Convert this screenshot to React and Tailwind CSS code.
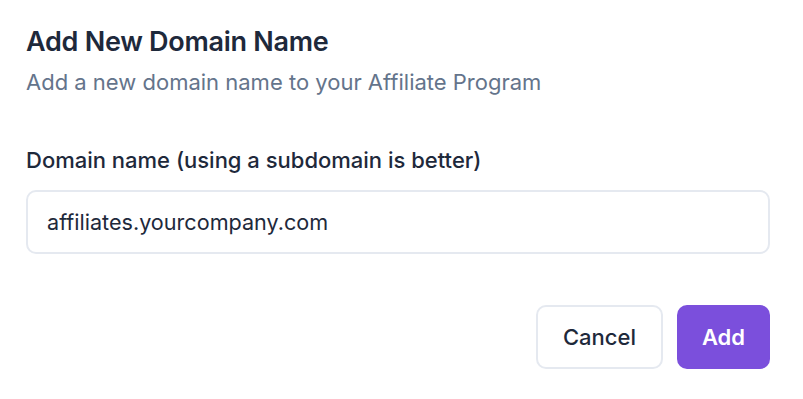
export default function App() {
  return (
    <div className="w-[803px] h-[399px] bg-white pl-[26px] pr-[33px] pt-[26px] font-['Inter','Liberation_Sans',sans-serif]">
      <h2 className="text-[27px] leading-[32px] font-semibold tracking-[-0.01em] text-[#1e293b]">Add New Domain Name</h2>
      <p className="mt-[8px] text-[22px] leading-[32px] text-[#64748b]">Add a new domain name to your Affiliate Program</p>

      <label className="block mt-[46px] text-[22px] leading-[32px] font-medium text-[#1e293b]">
        Domain name (using a subdomain is better)
      </label>
      <input
        className="mt-[14px] w-full h-[64px] rounded-[10px] border-2 border-[#e5e9f0] px-[19px] text-[21.6px] text-[#1e293b] outline-none"
        defaultValue="affiliates.yourcompany.com"
      />

      <div className="mt-[51px] flex justify-end gap-[14px]">
        <button className="w-[127px] h-[64px] rounded-[10px] border-2 border-[#e5e9f0] bg-white text-[22px] font-medium text-[#1e293b]">
          Cancel
        </button>
        <button className="w-[93px] h-[64px] rounded-[10px] bg-[#7b4fdc] text-[22px] font-semibold text-white">
          Add
        </button>
      </div>
    </div>
  );
}
